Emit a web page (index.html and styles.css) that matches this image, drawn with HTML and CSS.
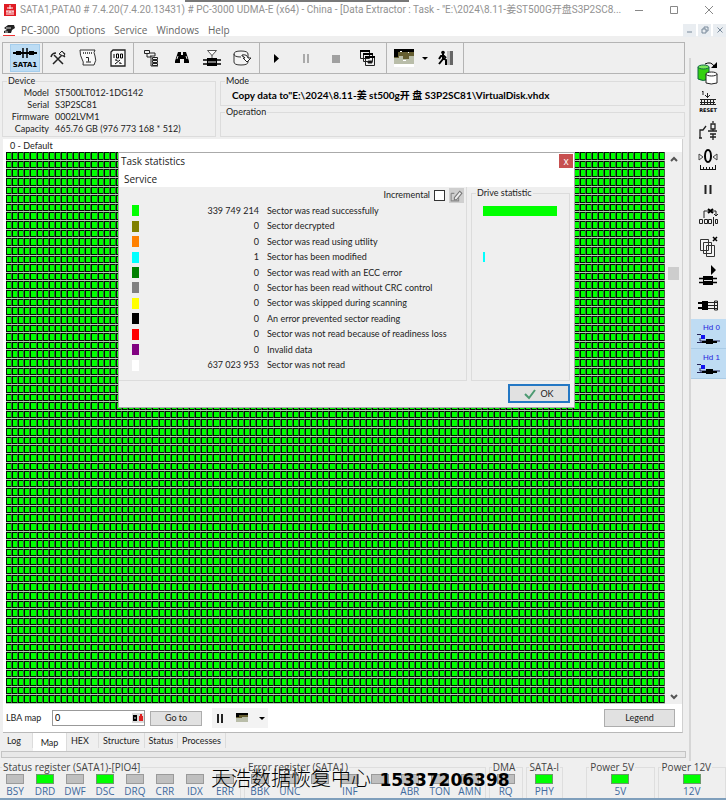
FILE: index.html
```html
<!DOCTYPE html>
<html lang="en">
<head>
<meta charset="utf-8">
<meta name="viewport" content="width=device-width, initial-scale=1">
<title>PC-3000 Data Extractor</title>
<link rel="stylesheet" href="styles.css">
</head>
<body>
<header class="titlebar">
  <svg class="app-icon" viewBox="0 0 12 12"><path fill="#e01c24" d="M0 0h12v12H0z"/><path fill="none" stroke="#fff" d="M6 1v4M3 4h6M2 7h8M3 7v4M9 7v4M5 11V8h2v3"/></svg>
  <h1>SATA1,PATA0 # 7.4.20(7.4.20.13431) # PC-3000 UDMA-E (x64) - China - [Data Extractor : Task - "E:\2024\8.11-姜ST500G开盘S3P2SC8...</h1>
  <div class="win-buttons">
    <button aria-label="Minimize"><svg viewBox="0 0 10 10"><path d="M1 5.500h8"/></svg></button>
    <button aria-label="Maximize"><svg viewBox="0 0 10 10"><path d="M1.500 1.500h7v7h-7z"/></svg></button>
    <button aria-label="Close"><svg viewBox="0 0 10 10"><path d="M1 1l8 8M9 1l-8 8"/></svg></button>
  </div>
</header>
<nav class="menubar">
  <svg class="menu-icon" viewBox="0 0 12 12"><path fill="#222" d="M1 4l4-3h6l1 3-3 2-1 3H1V7l3-1z"/><path stroke="#ddd" fill="none" d="M3 4h5M2 8h3"/><path stroke="#e33" d="M0 11.500h12"/></svg>
  <button>PC-3000</button><button>Options</button><button>Service</button><button>Windows</button><button>Help</button>
  <div class="mdi-buttons">
    <button aria-label="Minimize child"><svg viewBox="0 0 8 8"><path d="M1 6h5"/></svg></button>
    <button aria-label="Restore child"><svg viewBox="0 0 8 8"><path d="M3 3V1h4v4H5M1 3h4v4H1z"/></svg></button>
    <button aria-label="Close child"><svg viewBox="0 0 8 8"><path d="M1.500 1.500l5 5M6.500 1.500l-5 5"/></svg></button>
  </div>
</nav>

<div class="workspace">
  <main class="main">
    <div class="toolbar">
      <div class="tools">
        <button class="active" aria-label="SATA1"><svg viewBox="0 0 28 26"><path stroke="#000" stroke-width="2" d="M2 8h24"/><path d="M5 6h5v4H5zM18 6h5v4h-5z"/><path stroke="#000" stroke-width="1.500" fill="none" d="M12 3v10M16 3v10"/><text class="sata-label" x="14" y="22">SATA1</text></svg></button>
      </div>
      <div class="tools">
        <button aria-label="Utilities"><svg viewBox="0 0 20 20"><path fill="none" stroke="#222" stroke-width="1.500" d="M5 16l9-9M15 16L6 7M3 9q1-4 5-4M12 5l5 4M14 4l3 2"/><path fill="#eee" stroke="#222" d="M11 6l3-3 3 4-2 1z"/></svg></button>
        <button aria-label="Script"><svg viewBox="0 0 20 20"><path fill="#f8f8f8" stroke="#333" d="M2 2h15q-2 2 0 6t-1 9H5q1-3-1-6T2 2z"/><path stroke="#222" stroke-width="1.500" stroke-dasharray="1 1" d="M5 5h9"/><path stroke="#222" fill="none" d="M8 9.500h2.500v4M8 14h5"/></svg></button>
        <button aria-label="Percent"><svg viewBox="0 0 20 20"><path fill="#fafafa" stroke="#222" stroke-width="1.300" d="M5 2h12v16H3V4z"/><path stroke="#000" fill="none" d="M6 6v4M8.500 6h2v4h-2zM12.500 6h2v4h-2zM7 16l5-4M7 12h2v1M11 15h2v1"/></svg></button>
      </div>
      <div class="tools">
        <button aria-label="Tree"><svg viewBox="0 0 20 20"><path fill="none" stroke="#222" d="M2.500 2.500h5v3h-5zM5 6v3h4M8 5h5v3H8M9 8v10h7M10.500 9.500h5v2h-5zM10.500 12.500h5v2h-5zM10.500 15.500h5v2h-5z"/></svg></button>
        <button aria-label="Find"><svg viewBox="0 0 20 20"><path d="M6 4h3v3h2V4h3l3 9v2h-5v-4H8v4H3v-2z"/><path stroke="#ddd" d="M5 11l1-3M14 8l1 3"/></svg></button>
        <button aria-label="Filter"><svg viewBox="0 0 20 20"><path fill="#fff" stroke="#555" d="M5.500 2.500h9l-4.500 5zM10 7v3"/><path d="M5 10h10v8H5z"/><path stroke="#000" stroke-width="1.500" d="M1 12h18M1 16h18"/><path stroke="#eee" d="M6 14h8"/></svg></button>
        <button aria-label="Export base"><svg viewBox="0 0 20 20"><path fill="#f4f4f4" stroke="#333" d="M2 6q0-3 7-3t7 3v8q0 3-7 3t-7-3zM2 6q0 3 7 3"/><path fill="#fff" stroke="#222" d="M10 7q5-1 6 3h3l-4 4-4-4h2q-1-2-3-2z"/></svg></button>
      </div>
      <div class="tools">
        <button aria-label="Start"><svg viewBox="0 0 20 20"><path d="M8 6l5 4.500L8 15z"/></svg></button>
        <button aria-label="Pause"><svg viewBox="0 0 20 20"><path stroke="#aaa" stroke-width="2" d="M8 6v9M12 6v9"/></svg></button>
        <button aria-label="Stop"><svg viewBox="0 0 20 20"><path fill="#a0a0a0" d="M6 7h8v8H6z"/></svg></button>
        <button aria-label="Windows"><svg viewBox="0 0 20 20"><path fill="#eee" stroke="#222" d="M4.500 2.500h9v8h-9zM7.500 5.500h9v8h-9zM9.500 8.500h9v9h-9z"/><path stroke="#000" stroke-width="2" d="M4 3h10M7 6h10M9 9h10"/><path stroke="#222" d="M12 13h4v2h-4z"/></svg></button>
      </div>
      <div class="tools">
        <button aria-label="Map view"><svg viewBox="0 0 20 20"><path d="M0 1h20v9H0z"/><path fill="#655e31" d="M4 4h16v8H0V9h4z"/><path fill="#b9bda9" d="M0 10h5v-2h4v3h6V8h5v8H0z"/><path fill="#fff" d="M0 16h20v3H0zM6 3h2v1H6zM14 4h1v1h-1zM9 12h3v1H9z"/></svg></button>
        <button class="drop" aria-label="Map view menu"><svg viewBox="0 0 8 8"><path d="M1 3h6L4 6z"/></svg></button>
        <button aria-label="Exit"><svg viewBox="0 0 20 20"><path fill="#bbb" d="M11 3h3v14h-3z"/><path fill="#666" d="M14 3h3v14h-3z"/><circle cx="7" cy="4.500" r="1.800"/><path fill="none" stroke="#000" stroke-width="2" d="M7 6v5l-4 5M7 10l3 2v5M3 11l2-3h3l2 2"/></svg></button>
      </div>
    </div>

    <div class="info">
      <fieldset class="device">
        <legend>Device</legend>
        <dl>
          <dt>Model</dt><dd>ST500LT012-1DG142</dd>
          <dt>Serial</dt><dd>S3P2SC81</dd>
          <dt>Firmware</dt><dd>0002LVM1</dd>
          <dt>Capacity</dt><dd>465.76 GB (976 773 168 * 512)</dd>
        </dl>
      </fieldset>
      <div class="modes">
        <fieldset class="mode"><legend>Mode</legend><p>Copy data to"E:\2024\8.11-姜 st500g开 盘 S3P2SC81\VirtualDisk.vhdx</p></fieldset>
        <fieldset class="operation"><legend>Operation</legend></fieldset>
      </div>
    </div>

    <section class="map-panel">
      <h2>0 - Default</h2>
      <div class="map-area">
        <div class="map"><canvas id="map" aria-label="Sector map"></canvas></div>
        <div class="scrollbar">
          <button aria-label="Scroll up"><svg viewBox="0 0 8 8"><path d="M1 6l3-3 3 3"/></svg></button>
          <div class="thumb"></div>
          <button aria-label="Scroll down"><svg viewBox="0 0 8 8"><path d="M1 2l3 3 3-3"/></svg></button>
        </div>

        <div class="dialog" role="dialog" aria-labelledby="dlg-title">
          <div class="dialog-title"><h3 id="dlg-title">Task statistics</h3><button aria-label="Close dialog">x</button></div>
          <div class="dialog-menu"><button>Service</button></div>
          <div class="dialog-body">
            <div class="stats">
              <div class="incremental"><label for="inc">Incremental</label><input type="checkbox" id="inc"><button aria-label="Clear"><svg viewBox="0 0 14 14"><path fill="none" stroke="#888" d="M2 5h3M2 5v7h7V9"/><path fill="#eee" stroke="#777" d="M5 9l5-6 2 2-5 6H5z"/></svg></button></div>
              <table>
                <tbody>
                <tr><td><i class="sw read"></i></td><td class="num">339 749 214</td><td>Sector was read successfully</td></tr>
                <tr><td><i class="sw decrypted"></i></td><td class="num">0</td><td>Sector decrypted</td></tr>
                <tr><td><i class="sw utility"></i></td><td class="num">0</td><td>Sector was read using utility</td></tr>
                <tr><td><i class="sw modified"></i></td><td class="num">1</td><td>Sector has been modified</td></tr>
                <tr><td><i class="sw ecc"></i></td><td class="num">0</td><td>Sector was read with an ECC error</td></tr>
                <tr><td><i class="sw crc"></i></td><td class="num">0</td><td>Sector has been read without CRC control</td></tr>
                <tr><td><i class="sw skipped"></i></td><td class="num">0</td><td>Sector was skipped during scanning</td></tr>
                <tr><td><i class="sw error"></i></td><td class="num">0</td><td>An error prevented sector reading</td></tr>
                <tr><td><i class="sw notready"></i></td><td class="num">0</td><td>Sector was not read because of readiness loss</td></tr>
                <tr><td><i class="sw invalid"></i></td><td class="num">0</td><td>Invalid data</td></tr>
                <tr><td><i class="sw unread"></i></td><td class="num">637 023 953</td><td>Sector was not read</td></tr>
                </tbody>
              </table>
            </div>
            <fieldset class="drive"><legend>Drive statistic</legend><div class="bars"><i class="bar read"></i><i class="bar modified"></i></div></fieldset>
          </div>
          <div class="dialog-foot"><button><svg viewBox="0 0 12 12"><path d="M1 6l4 4 6-8"/></svg>OK</button></div>
        </div>
      </div>
      <div class="lba">
        <label for="lba">LBA map</label>
        <div class="lba-box"><input id="lba" type="text" value="0"><button aria-label="Number base"><svg viewBox="0 0 12 10"><path fill="#ddd" d="M0 0h12v10H0z"/><path d="M1 2h4v6H1z"/><path stroke="#ddd" d="M3 4v2"/><path fill="#d22" d="M7 3h1V1h2v2h1v5H7z"/></svg></button></div>
        <button class="btn goto">Go to</button>
        <div class="lba-tools">
          <button aria-label="Pause map"><svg viewBox="0 0 12 12"><path stroke="#222" stroke-width="2" d="M4 2v9M8 2v9"/></svg></button>
          <button aria-label="Map colours"><svg viewBox="0 0 12 12"><path d="M0 1h12v5H0z"/><path fill="#655e31" d="M3 3h9v4H0V5h3z"/><path fill="#b9bda9" d="M0 6h6V5h6v5H0z"/></svg></button>
          <button class="drop" aria-label="Map colours menu"><svg viewBox="0 0 8 8"><path d="M1 3h6L4 6z"/></svg></button>
        </div>
        <button class="btn map-legend">Legend</button>
      </div>
    </section>

    <div class="tabs" role="tablist">
      <button role="tab">Log</button><button role="tab" class="active" aria-selected="true">Map</button><button role="tab">HEX</button><button role="tab">Structure</button><button role="tab">Status</button><button role="tab">Processes</button>
    </div>
    <div class="strip"></div>
  </main>

  <aside class="sidebar">
    <button aria-label="Copy drive"><svg viewBox="0 0 24 24"><path fill="#35d010" stroke="#164" d="M2 6v12q5 3 11 0V6"/><ellipse cx="7.500" cy="6" rx="5.500" ry="2" fill="#7be85c" stroke="#164"/><path fill="#fff" stroke="#222" d="M10 13v9q5 2 11 0v-9"/><ellipse cx="15.500" cy="13" rx="5.500" ry="2" fill="#fff" stroke="#222"/><path fill="none" stroke="#000" d="M9 3q6-3 9 2"/><path d="M15 7h6V1z"/></svg></button>
    <button aria-label="Reset"><svg viewBox="0 0 24 24"><path fill="none" stroke="#222" d="M6 2l1-1v4M11.500 3v5M9 5l2.500 2.500L14 5M4 9.500h16M4 14.500h16M5.500 9v6M8.500 9v6M11.500 9v6M14.500 9v6M17.500 9v6M4 12.500h15"/><text class="reset-label" x="12" y="22">RESET</text></svg></button>
    <button aria-label="Power"><svg viewBox="0 0 24 24"><path fill="none" stroke="#222" stroke-width="1.300" d="M3 19h3M4 19v-8h3l3-4M17 2v2M15 5h4v5h-4zM17 10v2M12 12h9M14 15h6M17 15v6M14 18h6"/></svg></button>
    <button aria-label="Recalibrate"><svg viewBox="0 0 24 24"><ellipse cx="12" cy="8" rx="3" ry="6" fill="none" stroke="#000" stroke-width="2"/><path fill="none" stroke="#444" d="M3 6l4 3-4 3zM21 6l-4 3 4 3z"/><path fill="none" stroke="#111" d="M4 21.500h16M4.500 17v5M7.500 19v3M10.500 19v3M13.500 19v3M16.500 19v3M19.500 17v5"/></svg></button>
    <button aria-label="Pause process"><svg viewBox="0 0 24 24"><path stroke="#222" stroke-width="2" d="M9.500 8v9M14.500 8v9"/></svg></button>
    <button aria-label="Skip sectors"><svg viewBox="0 0 24 24"><path fill="none" stroke="#222" d="M8 12V5h12v5M18 8l2 2 2-2M3.500 13.500h3v4h-3zM8.500 13.500h3v4h-3zM12.500 13.500h3v4h-3zM17.500 11v9M19.500 13.500h2v4h-2z"/><path stroke="#000" stroke-width="2" d="M12 3l5 4M17 3l-5 4"/></svg></button>
    <button aria-label="Delete copies"><svg viewBox="0 0 24 24"><path fill="#f4f4f4" stroke="#333" d="M4.500 4.500h8v11h-8zM7.500 7.500h8v11h-8zM10.500 10.500h8v11h-8z"/><path stroke="#000" stroke-width="1.500" d="M17 2l4 4M21 2l-4 4"/></svg></button>
    <button aria-label="Run chip"><svg viewBox="0 0 24 24"><path d="M15 1l5 5-5 5zM7 12h10v9H7z"/><path stroke="#000" stroke-width="1.500" d="M3 14.500h18M3 18.500h18"/><path stroke="#ddd" d="M8 16.500h8"/></svg></button>
    <button aria-label="Connect chip"><svg viewBox="0 0 24 24"><path stroke="#000" stroke-width="2" d="M2 10h10M2 15h10"/><path d="M6 8h6v9H6z"/><path fill="none" stroke="#222" d="M12 9.500h9M12 12.500h9M12 15.500h9M18.500 8v9h3V8z"/></svg></button>
    <button class="hd active" aria-label="Hd 0"><span>Hd 0</span><svg viewBox="0 0 24 12"><path fill="#1414ee" d="M5 2h4v4H5z"/><path fill="none" stroke="#225" d="M1 1.500h4M4 5v3h20M1 9.500h6"/><path d="M10 6h7v5h-7zM6 8h4v2H6zM17 8h4v2h-4z"/></svg></button>
    <button class="hd active" aria-label="Hd 1"><span>Hd 1</span><svg viewBox="0 0 24 12"><path fill="#1414ee" d="M5 2h4v4H5z"/><path fill="none" stroke="#225" d="M1 1.500h4M4 5v3h20M1 9.500h6"/><path d="M10 6h7v5h-7zM6 8h4v2H6zM17 8h4v2h-4z"/></svg></button>
  </aside>
</div>

<footer class="registers">
  <fieldset class="wide"><legend>Status register (SATA1)-[PIO4]</legend>
    <div class="leds"><span>BSY</span><span class="on">DRD</span><span>DWF</span><span class="on">DSC</span><span>DRQ</span><span>CRR</span><span>IDX</span><span>ERR</span></div></fieldset>
  <fieldset class="wide"><legend>Error register (SATA1)</legend>
    <div class="leds"><span>BBK</span><span>UNC</span><span></span><span>INF</span><span></span><span>ABR</span><span>TON</span><span>AMN</span></div></fieldset>
  <fieldset class="dma"><legend>DMA</legend><div class="leds"><span>RQ</span></div></fieldset>
  <fieldset class="sata"><legend>SATA-I</legend><div class="leds"><span class="on">PHY</span></div></fieldset>
  <fieldset class="power"><legend>Power 5V</legend><div class="leds"><span class="on">5V</span></div></fieldset>
  <fieldset class="power"><legend>Power 12V</legend><div class="leds"><span class="on">12V</span></div></fieldset>
  <p class="watermark">天浩数据恢复中心 <strong>15337206398</strong></p>
</footer>
<script src="map.js"></script>
</body>
</html>
```
FILE: styles.css
```css
* { box-sizing: border-box; }

body {
  margin: 0;
  min-height: 100vh;
  display: flex;
  flex-direction: column;
  background: #efefef;
  color: #222;
  font: 9px/12px Lato, "Noto Sans CJK SC", sans-serif;
}

h1, h2, h3, p, dl, dd, fieldset, legend { margin: 0; padding: 0; font-weight: normal; }
button { margin: 0; padding: 0; border: 0; background: none; font: inherit; color: inherit; }
svg { display: block; }

.titlebar {
  position: relative;
  display: flex;
  align-items: center;
  height: 20px;
  padding-left: 4px;
  background: #fff;
}
.titlebar::before {
  content: "";
  position: absolute;
  top: 0;
  left: 185px;
  width: 224px;
  height: 2px;
  background: #777;
}
.app-icon { width: 12px; height: 12px; margin-right: 4px; flex: none; }
.titlebar h1 {
  flex: 1;
  overflow: hidden;
  white-space: nowrap;
  color: #929292;
  font: 10px/16px Roboto, "Noto Sans CJK SC", sans-serif;
}
.win-buttons { display: flex; }
.win-buttons button { width: 35px; height: 20px; display: grid; place-items: center; }
.win-buttons svg { width: 10px; height: 10px; fill: none; stroke: #888; }

.menubar {
  display: flex;
  align-items: center;
  gap: 9px;
  height: 20px;
  margin-bottom: 2px;
  padding-left: 3px;
  background: linear-gradient(#fff 16px, #efefef 16px);
  color: #666;
  font: 10px/16px "Open Sans", sans-serif;
}
.menu-icon { width: 12px; height: 12px; margin-right: -3px; }
.mdi-buttons { display: flex; gap: 2px; margin-left: auto; }
.mdi-buttons button { width: 13px; height: 13px; background: #e9edf1; display: grid; place-items: center; }
.mdi-buttons svg { width: 8px; height: 8px; fill: none; stroke: #78899a; }

.workspace { flex: 1; display: flex; }
.main { flex: 1; min-width: 0; display: flex; flex-direction: column; }

.toolbar {
  display: flex;
  height: 32px;
  margin: 0 4px 0 2px;
  border: 1px solid #b4b4b4;
}
.tools { display: flex; align-items: center; border-right: 1px solid #b4b4b4; }
.tools:first-child { padding: 0 2px 0 7px; }
.tools:nth-child(3) { padding: 0 2px 0 3px; }
.tools:nth-child(4) { padding: 0 5px 0 1px; }
.tools:nth-child(5) { padding: 0 2px; }
.tools button { width: 30px; height: 28px; display: grid; place-items: center; }
.tools svg { width: 20px; height: 20px; }
.tools .active { background: #bcdcf4; border: 1px solid #a4cdec; }
.tools .active svg { width: 28px; height: 26px; }
.tools .drop { width: 12px; }
.tools .drop svg { width: 8px; height: 8px; }
.sata-label { font: bold 7px "DejaVu Sans", sans-serif; text-anchor: middle; }

.info { display: flex; gap: 4px; height: 62px; margin: 1px 4px 2px 2px; }
fieldset { min-width: 0; border: 1px solid #dcdcdc; }
legend { margin-left: 4px; padding: 0 1px; }
.device { width: 30%; min-width: 214px; flex: none; }
.device dl { display: grid; grid-template-columns: 46px 1fr; column-gap: 6px; line-height: 12px; }
.device dt { text-align: right; }
.device dd { white-space: nowrap; }
.modes { flex: 1; min-width: 0; display: flex; flex-direction: column; }
.mode { height: 31px; }
.mode p {
  padding-left: 11px;
  white-space: nowrap;
  color: #000;
  font: bold 10px/16px Lato, "Noto Sans CJK SC", sans-serif;
}
.operation { flex: 1; }

.map-panel {
  flex: 1;
  display: flex;
  flex-direction: column;
  margin: 0 6px 0 3px;
  background: #fff;
  border-bottom: 1px solid #b8b8b8;
  border-right: 1px solid #d0d0d0;
}
.map-panel h2 { padding-left: 7px; font-size: 9px; line-height: 13px; }
.map-area { position: relative; flex: 1; min-height: 552px; display: flex; padding-left: 3px; }
.map { flex: 1; min-width: 0; height: 552px; }
.map canvas { display: block; width: 100%; height: 100%; }
.scrollbar {
  width: 17px;
  display: flex;
  flex-direction: column;
  background: #efefef;
}
.scrollbar button { height: 14px; display: grid; place-items: center; }
.scrollbar svg { width: 8px; height: 8px; fill: none; stroke: #555; stroke-width: 2; }
.thumb { height: 13px; width: 11px; margin: 101px auto auto; background: #cdcdcd; }

.dialog {
  position: absolute;
  top: 0;
  left: 115px;
  width: 457px;
  height: 256px;
  display: flex;
  flex-direction: column;
  background: #efefef;
  border: 1px solid #aaa;
}
.dialog-title, .dialog-menu { background: #fff; font: 10px/16px "Open Sans", sans-serif; }
.dialog-title { display: flex; justify-content: space-between; height: 18px; padding-left: 2px; }
.dialog-title h3 { font: inherit; }
.dialog-title button { width: 14px; height: 14px; margin: 1px 1px 0 0; background: #c75050; color: #fff; line-height: 12px; }
.dialog-menu { height: 16px; padding-left: 5px; }
.dialog-body { display: flex; gap: 4px; padding-right: 4px; }
.stats { flex: 1; height: 194px; border-right: 1px solid #dcdcdc; border-bottom: 1px solid #dcdcdc; }
.incremental { display: flex; align-items: center; justify-content: flex-end; gap: 4px; height: 16px; padding-right: 2px; }
.incremental input { appearance: none; width: 11px; height: 11px; margin: 0; background: #fff; border: 1px solid #333; }
.incremental button { width: 15px; height: 15px; background: #cfcfcf; }
.stats table { width: 100%; height: 170px; table-layout: fixed; border-collapse: collapse; }
.stats td { padding: 0; line-height: 12px; white-space: nowrap; }
.stats td:first-child { width: 40px; padding-left: 13px; }
.stats td.num { width: 108px; padding-right: 8px; text-align: right; }
.sw { display: block; width: 7px; height: 11px; }
.read { background: #00ff00; }
.decrypted { background: #808000; }
.utility { background: #ff8000; }
.modified { background: #00ffff; }
.ecc { background: #008000; }
.crc { background: #808080; }
.skipped { background: #ffff00; }
.error { background: #000; }
.notready { background: #ff0000; }
.invalid { background: #800080; }
.unread { background: #fff; }
.drive { width: 99px; height: 194px; }
.bars { display: grid; grid-template-rows: repeat(11, 1fr); height: 170px; padding: 0 12px 0 11px; margin-top: 4px; }
.bar { height: 10px; align-self: center; }
.bar.modified { grid-row: 4; width: 2px; }
.dialog-foot { display: flex; justify-content: flex-end; padding: 3px 4px 0 0; }
.dialog-foot button {
  display: flex;
  align-items: center;
  justify-content: center;
  gap: 4px;
  width: 62px;
  height: 19px;
  background: #e1e1e1;
  border: 2px solid #2478c4;
}
.dialog-foot svg { width: 12px; height: 12px; fill: none; stroke: #4c9a72; stroke-width: 2; }

.lba { display: flex; align-items: center; height: 28px; padding: 0 7px 0 3px; }
.lba label { width: 46px; }
.lba-box { display: flex; width: 93px; height: 16px; border: 1px solid #999; }
.lba-box input { flex: 1; min-width: 0; padding: 0 2px; border: 0; outline: 0; font: inherit; background: #fff; }
.lba-box svg { width: 12px; height: 10px; }
.btn { height: 15px; background: #e1e1e1; border: 1px solid #adadad; }
.goto { width: 52px; margin: 0 10px 0 5px; }
.lba-tools { display: flex; align-items: center; height: 20px; background: #f3f3f3; }
.lba-tools button { width: 16px; display: grid; place-items: center; }
.lba-tools button:nth-child(2) { width: 28px; }
.lba-tools svg { width: 12px; height: 12px; }
.lba-tools .drop { width: 12px; }
.lba-tools .drop svg { width: 8px; height: 8px; }
.map-legend { width: 71px; height: 18px; margin-left: auto; }

.tabs { display: flex; height: 18px; padding-left: 3px; }
.tabs button { height: 15px; padding: 0 4px; border-right: 1px solid #dcdcdc; }
.tabs button:first-child { width: 30px; text-align: left; }
.tabs .active { width: 34px; height: 18px; padding-top: 2px; background: #fff; }
.tabs button:nth-child(3) { width: 32px; text-align: left; }
.strip { height: 7px; margin: 0 3px 3px 1px; border: 1px solid #c4c4c4; background: #e8e8e8; }

.sidebar { width: 37px; margin-top: 16px; border-left: 2px solid #d6d6d6; }
.sidebar button { width: 100%; height: 29px; display: grid; place-items: center; padding-right: 2px; }
.sidebar svg { width: 24px; height: 24px; }
.reset-label { font: bold 5px "DejaVu Sans", sans-serif; text-anchor: middle; }
.sidebar .hd { height: 30px; background: #bfdcf3; border-bottom: 1px solid #a9cbe6; color: #2424dd; font: 8px/10px "Liberation Sans", sans-serif; align-content: center; }
.hd span { justify-self: end; padding-right: 4px; }
.sidebar .hd svg { width: 24px; height: 12px; }

.registers {
  position: relative;
  display: flex;
  gap: 3px;
  height: 39px;
  border-bottom: 2px solid #7f9fbc;
  color: #444;
  font: 10px/13px "Open Sans", "Noto Sans CJK SC", sans-serif;
}
.registers fieldset { border-color: #dedede; border-bottom: 0; }
.registers legend { white-space: nowrap; margin-left: 2px; }
.registers .wide:first-child { border-left: 0; }
.wide { flex: 242 1 0; }
.wide .leds { display: grid; grid-template-columns: repeat(8, 1fr); }
.dma { flex: 32 1 0; }
.sata { flex: 36 1 0; margin-right: 20px; }
.power { flex: 67 1 0; }
.leds span { display: block; height: 24px; text-align: center; color: #416a9e; }
.leds span::before { content: ""; display: block; width: 16px; height: 8px; margin: 0 auto 1px; border: 1px solid #9a9a9a; background: #bfbfbf; }
.leds .on::before { background: #00ff00; border-color: #6b9a6b; }
.watermark {
  position: absolute;
  left: 211px;
  top: 4px;
  white-space: nowrap;
  color: #000;
  font: 300 20px/26px "Noto Sans CJK SC", sans-serif;
}
.watermark strong { margin-left: 4px; font: bold 17px/26px "DejaVu Sans", sans-serif; }
```
FILE: map.js
```js
// Draws the sector map as a grid of outlined cells.
const COLS = 108;
const ROWS = 64;
const canvas = document.getElementById("map");

function drawMap() {
  const w = canvas.width = canvas.clientWidth;
  const h = canvas.height = canvas.clientHeight;
  const ctx = canvas.getContext("2d");
  ctx.fillStyle = "#b4ccb4";
  ctx.fillRect(0, 0, w, h);
  for (let r = 0; r < ROWS; r++) {
    const y = Math.round(r * h / ROWS);
    const ch = Math.round((r + 1) * h / ROWS) - y;
    for (let c = 0; c < COLS; c++) {
      const x = Math.round(c * w / COLS);
      const cw = Math.round((c + 1) * w / COLS) - x;
      ctx.fillStyle = "#3c643c";
      ctx.fillRect(x, y, cw, ch - 1);
      ctx.fillStyle = "#001400";
      ctx.fillRect(x, y, cw - 1, ch - 1);
      ctx.fillStyle = "#00ff00";
      ctx.fillRect(x + 1, y + 1, cw - 2, ch - 3);
    }
  }
}

drawMap();
window.addEventListener("resize", drawMap);
```
